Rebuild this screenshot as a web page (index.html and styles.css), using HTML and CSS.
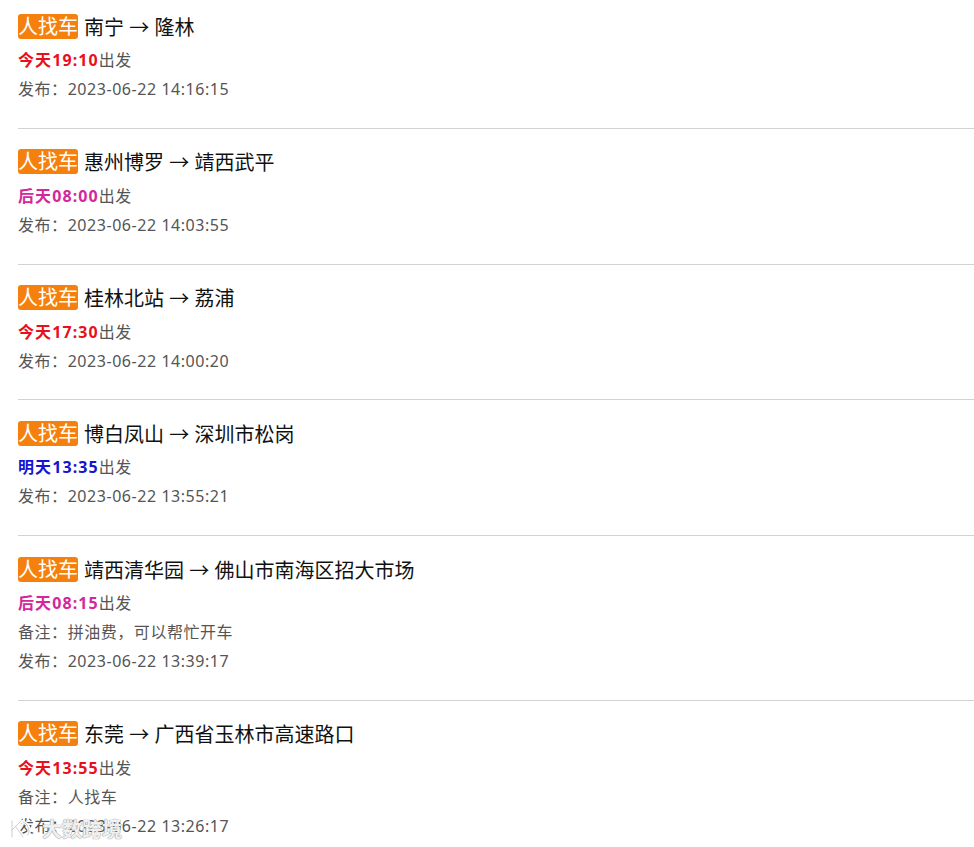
FILE: index.html
```html
<!DOCTYPE html>
<html>
<head>
<meta charset="utf-8" />
<title>人找车</title>
<link rel="stylesheet" href="styles.css">
</head>
<body>
<div class="list">
	<div class="item">
		<div class="route"><span class="tag">人找车</span><span class="places">南宁 <span class="arrow">→</span> 隆林</span></div>
		<div class="line"><b class="today">今天19:10</b>出发</div>
		<div class="line">发布：2023-06-22 14:16:15</div>
	</div>
	<div class="item">
		<div class="route"><span class="tag">人找车</span><span class="places">惠州博罗 <span class="arrow">→</span> 靖西武平</span></div>
		<div class="line"><b class="after">后天08:00</b>出发</div>
		<div class="line">发布：2023-06-22 14:03:55</div>
	</div>
	<div class="item">
		<div class="route"><span class="tag">人找车</span><span class="places">桂林北站 <span class="arrow">→</span> 荔浦</span></div>
		<div class="line"><b class="today">今天17:30</b>出发</div>
		<div class="line">发布：2023-06-22 14:00:20</div>
	</div>
	<div class="item">
		<div class="route"><span class="tag">人找车</span><span class="places">博白凤山 <span class="arrow">→</span> 深圳市松岗</span></div>
		<div class="line"><b class="tomorrow">明天13:35</b>出发</div>
		<div class="line">发布：2023-06-22 13:55:21</div>
	</div>
	<div class="item">
		<div class="route"><span class="tag">人找车</span><span class="places">靖西清华园 <span class="arrow">→</span> 佛山市南海区招大市场</span></div>
		<div class="line"><b class="after">后天08:15</b>出发</div>
		<div class="line">备注：拼油费，可以帮忙开车</div>
		<div class="line">发布：2023-06-22 13:39:17</div>
	</div>
	<div class="item">
		<div class="route"><span class="tag">人找车</span><span class="places">东莞 <span class="arrow">→</span> 广西省玉林市高速路口</span></div>
		<div class="line"><b class="today">今天13:55</b>出发</div>
		<div class="line">备注：人找车</div>
		<div class="line">发布：2023-06-22 13:26:17</div>
	</div>
</div>
<div class="mark">
	<svg class="logo" width="24" height="22" viewBox="0 0 24 22">
		<path d="M4 3 L4 19 M4 12 L13 3 M8 9 L15 19 M15 4 A9 9 0 0 1 20 17" fill="none" stroke="#ffffff" stroke-width="3.4" stroke-linecap="round"/>
		<path d="M4 3 L4 19 M4 12 L13 3 M8 9 L15 19 M15 4 A9 9 0 0 1 20 17" fill="none" stroke="#9a9a9a" stroke-width="0.8" stroke-linecap="round" opacity="0.6"/>
	</svg>
	<span>大数跨境</span>
</div>
</body>
</html>
```

FILE: styles.css
```css
*{
	box-sizing: border-box;
}

body{
	margin: 0;
	background-color: #ffffff;
	font-family: "Noto Sans", "Noto Sans CJK SC", sans-serif;
	overflow: hidden;
}

.item{
	margin-left: 18px;
	padding: 18px 0 23.75px;
	border-bottom: 1px solid #d2d2d2;
}

.item:first-child{
	padding-top: 11px;
}

.route{
	display: flex;
	align-items: center;
	height: 30px;
	font-size: 20px;
	color: #111111;
}

.tag{
	height: 25px;
	line-height: 25px;
	border-radius: 3px;
	background-color: #f5800d;
	color: #ffffff;
	font-size: 20px;
	margin-right: 6px;
}

.arrow{
	font-family: "Noto Sans CJK SC", sans-serif;
}

.line{
	line-height: 29px;
	font-size: 16px;
	letter-spacing: 0.55px;
	color: #555555;
}

.line:nth-child(2){
	margin-top: 5px;
}

.line b{
	font-weight: bold;
	letter-spacing: 1.1px;
}

.today{
	color: #e8101c;
}

.tomorrow{
	color: #1414d2;
}

.after{
	color: #d4279c;
}

.mark{
	position: absolute;
	left: 8px;
	top: 814px;
	display: flex;
	align-items: center;
	gap: 10px;
	font-size: 20px;
	font-weight: bold;
	color: rgba(255, 255, 255, 0.9);
	text-shadow: 0 0 1px #8a8a8a, 0 0 1px #8a8a8a;
}
```
